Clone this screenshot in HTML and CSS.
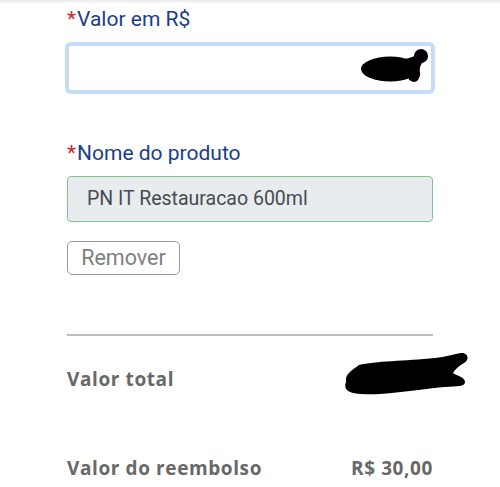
FILE: index.html
```html
<!DOCTYPE html>
<html lang="pt-BR">
<head>
<meta charset="utf-8">
<title>Reembolso</title>
<link rel="stylesheet" href="styles.css">
</head>
<body>
<div class="top-shadow"></div>
<main class="form">
  <div class="field">
    <label class="label"><span class="req">*</span>Valor em R$</label>
    <div class="input input-focus">
      <svg class="redact redact-input" width="72" height="38" viewBox="0 0 72 38">
        <ellipse cx="33" cy="22" rx="29" ry="12.5" fill="#000"/>
        <circle cx="64" cy="9" r="7" fill="#000"/>
        <path d="M48 12 C54 11 58 9 62 6 L69 12 C64 16 62 20 63 26 C64 32 58 35 52 33 Z" fill="#000"/>
        <circle cx="57" cy="30" r="5" fill="#000"/>
      </svg>
    </div>
  </div>
  <div class="field field-2">
    <label class="label"><span class="req">*</span>Nome do produto</label>
    <div class="input input-readonly">PN IT Restauracao 600ml</div>
  </div>
  <button class="btn-remove" type="button">Remover</button>
  <hr class="divider">
  <div class="summary-row row-total">
    <span class="summary-label">Valor total</span>
    <svg class="redact redact-total" width="124" height="44" viewBox="0 0 124 44">
      <path d="M1 30 C0 22 6 19 14 13 C30 9 60 9 90 6 C100 5 110 2 116 1 C123 0 125 8 119 11 C114 14 110 17 108 21 C112 24 120 25 120 30 C120 35 112 34 100 35 C85 36 60 40 35 42 C20 43 4 42 1 37 C0 35 0 32 1 30 Z" fill="#000"/>
    </svg>
  </div>
  <div class="summary-row row-refund">
    <span class="summary-label">Valor do reembolso</span>
    <span class="summary-value">R$ 30,00</span>
  </div>
</main>
</body>
</html>
```
FILE: styles.css
```css
html, body {
  margin: 0;
  padding: 0;
  background: #ffffff;
}
body {
  width: 500px;
  height: 487px;
  overflow: hidden;
  font-family: Roboto, "Liberation Sans", sans-serif;
}
.top-shadow {
  height: 4px;
  background: linear-gradient(#eaeaea, #ffffff);
}
.form {
  width: 366px;
  margin-left: 67px;
  display: flex;
  flex-direction: column;
}
.field {
  display: flex;
  flex-direction: column;
}
.label {
  font-size: 21px;
  line-height: 24px;
  color: #1a3e8c;
  margin-top: 3px;
  margin-bottom: 11px;
}
.req {
  color: #d8232a;
  margin-right: 1px;
}
.input {
  box-sizing: border-box;
  position: relative;
  border-radius: 5px;
}
.input-focus {
  height: 52px;
  margin-left: -2px;
  margin-right: -2px;
  border: 4px solid #c4dcf6;
  border-radius: 6px;
  background: #ffffff;
}
.redact-input {
  position: absolute;
  right: 2px;
  top: 1px;
}
.field-2 {
  margin-top: 47px;
}
.field-2 .label {
  margin-top: 0;
  margin-bottom: 11px;
}
.input-readonly {
  height: 46px;
  border: 1px solid #80c48e;
  background: #e9ecef;
  border-radius: 4px;
  font-size: 19.5px;
  line-height: 44px;
  padding-left: 19px;
  color: #474b4f;
}
.btn-remove {
  align-self: flex-start;
  margin-top: 19px;
  height: 34px;
  width: 113px;
  padding: 0;
  border: 1px solid #9a9a9a;
  border-radius: 5px;
  background: #ffffff;
  font-family: Roboto, "Liberation Sans", sans-serif;
  font-size: 21.5px;
  line-height: 32px;
  color: #808080;
}
.divider {
  margin: 59px 0 0 0;
  border: 0;
  height: 2px;
  background: #bdbdbd;
}
.summary-row {
  display: flex;
  justify-content: space-between;
  align-items: flex-start;
  font-family: "Open Sans", "Liberation Sans", sans-serif;
  font-weight: 700;
  font-size: 19px;
  line-height: 26px;
  letter-spacing: 0.6px;
  color: #686868;
}
.row-total {
  margin-top: 16px;
}
.row-total .summary-label {
  margin-top: 14px;
}
.redact-total {
  margin-right: -36px;
}
.row-refund {
  margin-top: 59px;
}
.summary-value {
  color: #686868;
}
```
